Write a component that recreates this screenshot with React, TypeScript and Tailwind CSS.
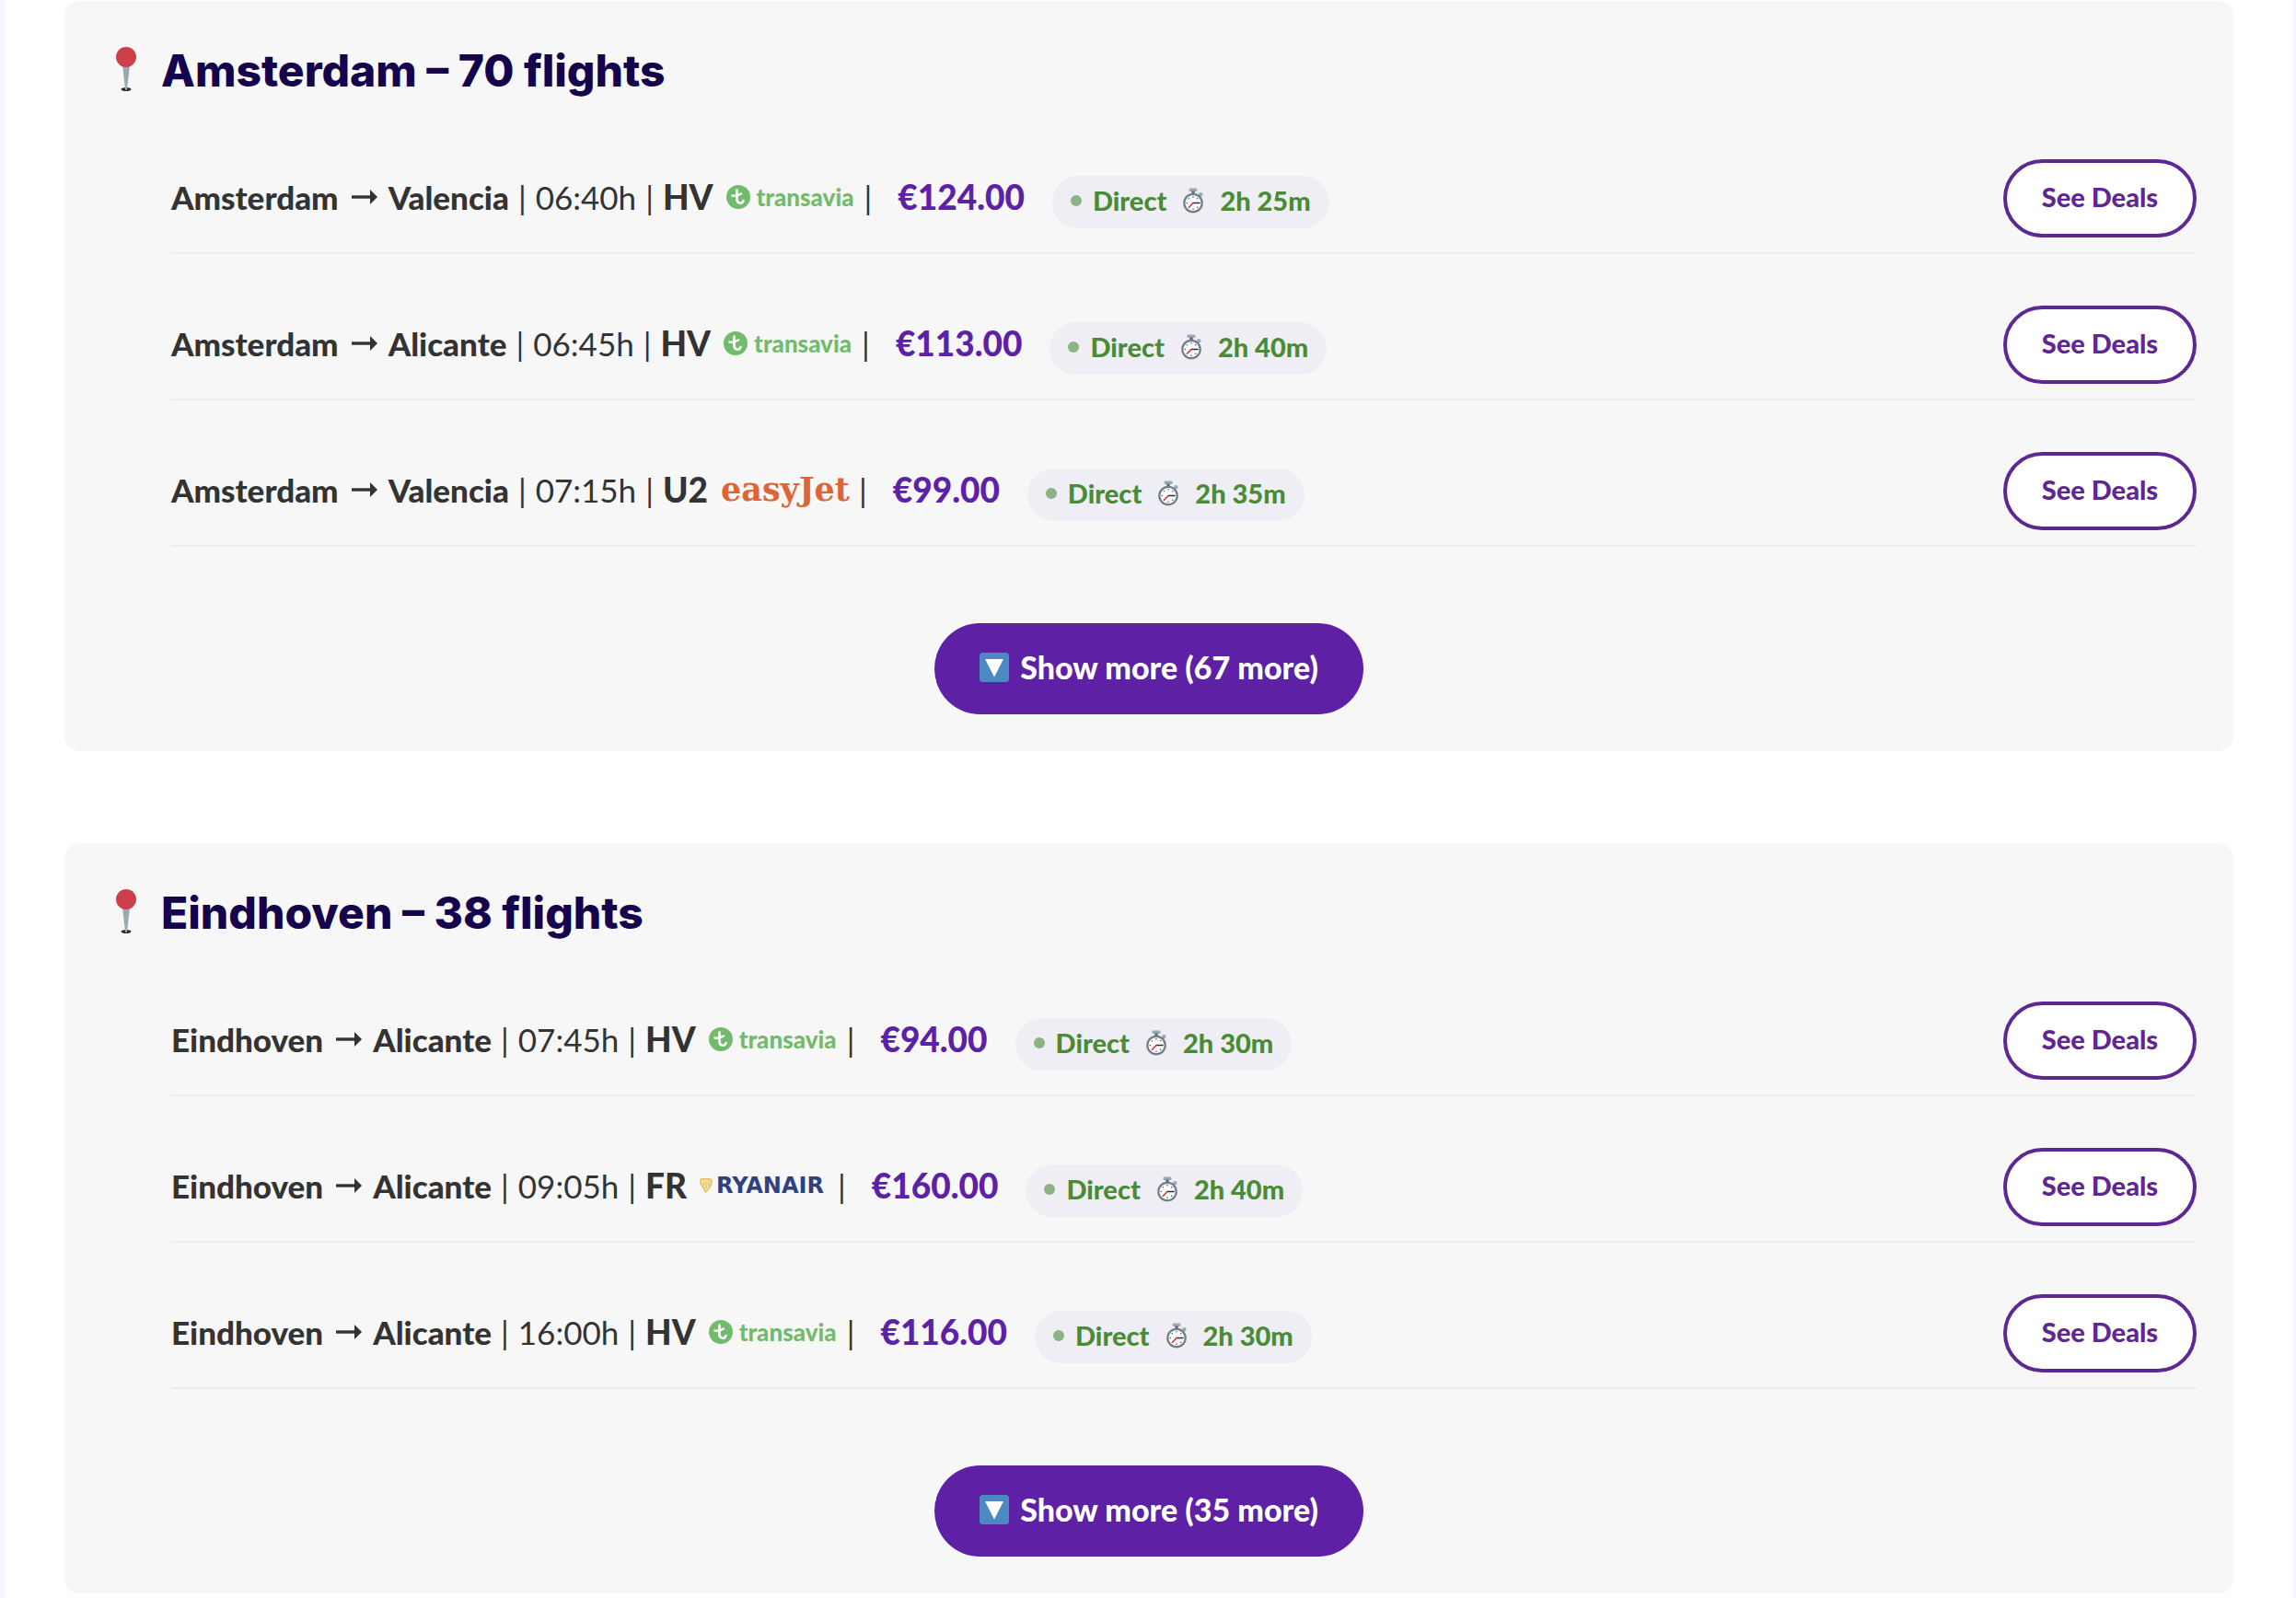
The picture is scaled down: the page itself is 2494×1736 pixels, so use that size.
import { useState } from 'react'

type Airline = 'transavia' | 'easyjet' | 'ryanair'

interface Flight {
  from: string
  to: string
  time: string
  code: string
  airline: Airline
  price: string
  duration: string
}

interface Departure {
  city: string
  total: number
  flights: Flight[]
}

const departures: Departure[] = [
  {
    city: 'Amsterdam',
    total: 70,
    flights: [
      { from: 'Amsterdam', to: 'Valencia', time: '06:40h', code: 'HV', airline: 'transavia', price: '€124.00', duration: '2h 25m' },
      { from: 'Amsterdam', to: 'Alicante', time: '06:45h', code: 'HV', airline: 'transavia', price: '€113.00', duration: '2h 40m' },
      { from: 'Amsterdam', to: 'Valencia', time: '07:15h', code: 'U2', airline: 'easyjet', price: '€99.00', duration: '2h 35m' },
    ],
  },
  {
    city: 'Eindhoven',
    total: 38,
    flights: [
      { from: 'Eindhoven', to: 'Alicante', time: '07:45h', code: 'HV', airline: 'transavia', price: '€94.00', duration: '2h 30m' },
      { from: 'Eindhoven', to: 'Alicante', time: '09:05h', code: 'FR', airline: 'ryanair', price: '€160.00', duration: '2h 40m' },
      { from: 'Eindhoven', to: 'Alicante', time: '16:00h', code: 'HV', airline: 'transavia', price: '€116.00', duration: '2h 30m' },
    ],
  },
]

function PinIcon() {
  return (
    <svg className="h-12 w-6 shrink-0" viewBox="0 0 24 48" aria-hidden="true">
      <ellipse cx="12" cy="46" rx="5.5" ry="2" fill="#292f33" />
      <path d="M8 20h8l-3 26a1 1 0 0 1-2 0z" fill="#9aaab4" />
      <circle cx="12" cy="11" r="11" fill="#cd404b" />
    </svg>
  )
}

function StopwatchIcon() {
  return (
    <svg className="h-7 w-[22px] shrink-0" viewBox="0 0 22 28" aria-hidden="true">
      <rect x="6.5" y="0.5" width="9" height="3.6" rx="1.4" fill="#99aab5" />
      <rect x="9.3" y="3.5" width="3.4" height="4" fill="#5c6a75" />
      <circle cx="19.3" cy="7.2" r="2.2" fill="#99aab5" />
      <circle cx="11" cy="16.5" r="9.7" fill="#fff" stroke="#727f8a" strokeWidth="2.2" />
      <g fill="#4a545c">
        <circle cx="11" cy="9.8" r="0.8" />
        <circle cx="11" cy="23.2" r="0.8" />
        <circle cx="4.3" cy="16.5" r="0.8" />
        <circle cx="6.3" cy="11.8" r="0.8" />
        <circle cx="15.7" cy="11.8" r="0.8" />
        <circle cx="15.7" cy="21.2" r="0.8" />
      </g>
      <path d="M11 16.5h7" stroke="#292f33" strokeWidth="1.6" strokeLinecap="round" />
      <path d="M11 16.5l-4.6 4.8" stroke="#dd2e44" strokeWidth="1.6" strokeLinecap="round" />
    </svg>
  )
}

function ArrowIcon() {
  return (
    <svg className="mr-[2px] ml-1 h-4 w-7 shrink-0" viewBox="0 0 28 16" role="img" aria-label="to">
      <path d="M0 8h22" stroke="#333" strokeWidth="3.4" />
      <path d="M20 0L28 8l-8 8z" fill="#333" />
    </svg>
  )
}

function DownIcon() {
  return (
    <svg className="size-8 shrink-0" viewBox="0 0 32 32" aria-hidden="true">
      <rect width="32" height="32" rx="3.5" fill="#4c89c2" />
      <path d="M6 7h20L16 26.5z" fill="#fff" />
    </svg>
  )
}

function AirlineLogo({ airline }: { airline: Airline }) {
  if (airline === 'easyjet') {
    return (
      <span className="w-[140px] font-['DejaVu_Serif',serif] text-[35px] leading-9 font-bold text-[#dd6638]">
        easyJet
      </span>
    )
  }

  if (airline === 'ryanair') {
    return (
      <span className="flex w-[140px] items-center gap-1">
        <svg className="h-4 w-[14px] shrink-0" viewBox="0 0 14 16" fill="none" aria-hidden="true">
          <path d="M1 1.5C4 0 10 0 13 2c0 5-2 9-6.5 13C5 11 2.5 8 1 5.5z" fill="#f3e3b4" stroke="#e6be55" strokeWidth="1.5" />
          <path d="M4.5 3.5v4M7 3v8.5M9.8 3.5v5.5" stroke="#e6be55" />
        </svg>
        <span className="font-['DejaVu_Sans',sans-serif] text-[24px] leading-8 font-bold text-[#2d427f]">RYANAIR</span>
      </span>
    )
  }

  return (
    <span className="flex w-[140px] items-center gap-[7px] text-[#72bb6c]">
      <svg className="size-[26px] shrink-0" viewBox="0 0 26 26" aria-hidden="true">
        <circle cx="13" cy="13" r="13" fill="#72bb6c" />
        <path
          d="M11.5 5.5v10c0 5 6 5.5 7 1.5M6.5 11.5c3 .8 6.5-.2 9.5-2"
          fill="none"
          stroke="#fff"
          strokeWidth="2.6"
          strokeLinecap="round"
        />
      </svg>
      <span className="text-[26px] leading-8 font-black">transavia</span>
    </span>
  )
}

function FlightRow({ flight }: { flight: Flight }) {
  return (
    <li className="flex items-center justify-between border-b-2 border-[#ececec] pt-14 pb-4">
      <div className="flex items-center gap-[10px] pb-1 text-[35px] leading-10 text-[#333]">
        <span className="font-black">{flight.from}</span>
        <ArrowIcon />
        <span className="font-black">{flight.to}</span>
        <span>|</span>
        <span>{flight.time}</span>
        <span>|</span>
        <span className="mr-1 text-[37px] font-black">{flight.code}</span>
        <AirlineLogo airline={flight.airline} />
        <span>|</span>
        <span className="mr-5 ml-[18px] text-[37px] font-black text-[#5b21a6]">{flight.price}</span>
        <span className="mt-3 flex h-[57px] items-center rounded-full bg-[#efeef5] px-5 pb-1 text-[29px] font-black text-[#4a8b35]">
          <span className="mr-3 size-3 rounded-full bg-[#8bb383]" />
          Direct
          <span className="mx-[18px]">
            <StopwatchIcon />
          </span>
          {flight.duration}
        </span>
      </div>
      <button
        type="button"
        className="h-[85px] w-[210px] rounded-full border-4 border-[#5f2792] bg-white pb-1 text-[29px] font-black text-[#5f2792]"
      >
        See Deals
      </button>
    </li>
  )
}

function DepartureCard({ departure }: { departure: Departure }) {
  const [loading, setLoading] = useState(false)
  const remaining = departure.total - departure.flights.length

  return (
    <section className="rounded-2xl bg-[#f7f7f7] pt-[50px] pr-10 pb-10">
      <h2 className="mb-[18px] flex h-12 items-center gap-[26px] pl-[55px] font-[Inter,sans-serif] text-[48px] font-extrabold text-[#15034b]">
        <PinIcon />
        <span className="pt-1">
          {departure.city} – {departure.total} flights
        </span>
      </h2>
      <ul className="pl-[116px]">
        {departure.flights.map((flight) => (
          <FlightRow key={flight.time} flight={flight} />
        ))}
      </ul>
      <div className="mt-[83px] flex justify-center pl-10">
        <button
          type="button"
          disabled={loading}
          onClick={() => setLoading(true)}
          className="flex h-[99px] w-[466px] items-center justify-center gap-3 rounded-full bg-[#5e20a5] pb-1 text-[34px] font-black text-white"
        >
          <DownIcon />
          Show more ({remaining} more)
        </button>
      </div>
    </section>
  )
}

export default function App() {
  return (
    <div className="min-h-screen bg-[#f5f8ff] pr-1 pl-[6px] font-[Lato,sans-serif]">
      <main className="flex min-h-screen flex-col gap-[100px] bg-white px-16 pt-px">
        {departures.map((departure) => (
          <DepartureCard key={departure.city} departure={departure} />
        ))}
      </main>
    </div>
  )
}
